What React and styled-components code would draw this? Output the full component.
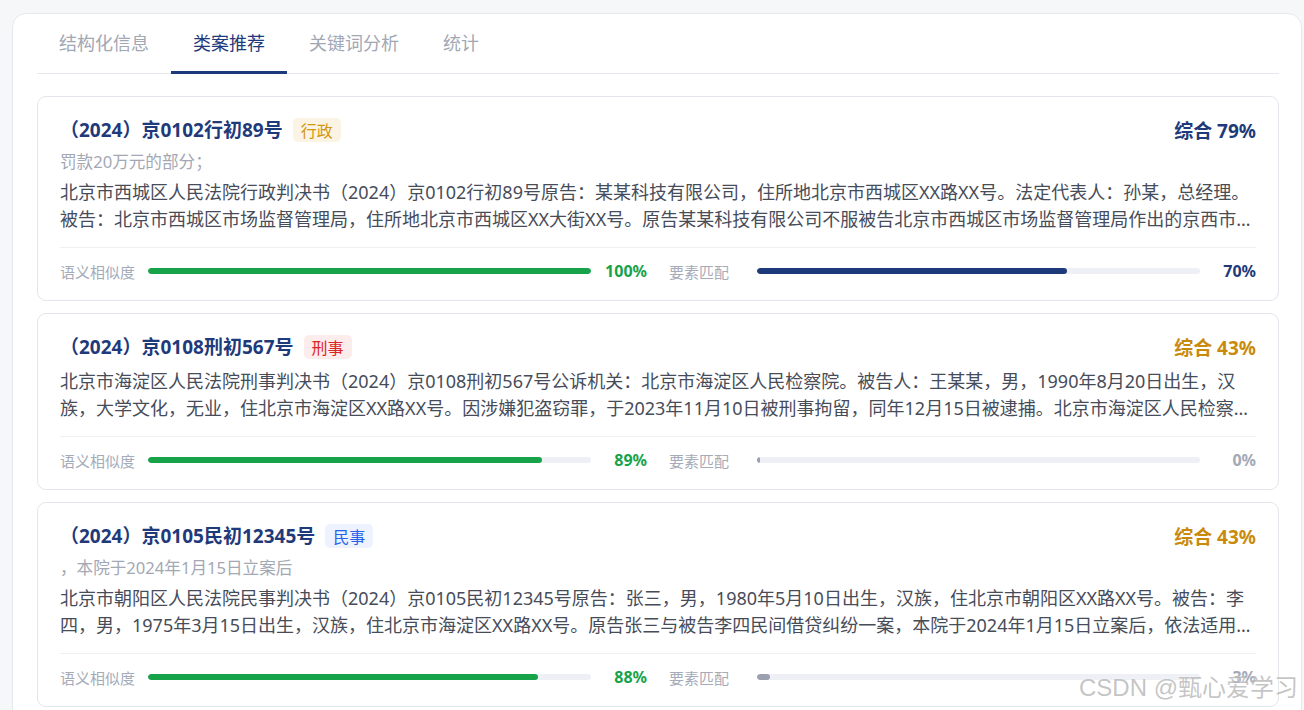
import React from "react";
import styled, { createGlobalStyle } from "styled-components";

const Global = createGlobalStyle`
  html, body { margin: 0; padding: 0; background: #f6f7f9; overflow: hidden; }
  body { font-family: "Noto Sans", "Noto Sans CJK SC", sans-serif; }
  * { box-sizing: border-box; }
`;

const Page = styled.div`
  height: 710px;
  padding: 13px 2px 0 12px;
  position: relative;
`;

const Panel = styled.div`
  background: #fff;
  border: 1px solid #e6e8ee;
  border-radius: 14px;
  padding: 14px 22px 20px 24px;
  min-height: 720px;
`;

const TabList = styled.div`
  display: flex;
  border-bottom: 1px solid #e6e8ee;
`;

const Tab = styled.div`
  padding: 0 22px 12px;
  line-height: 31px;
  font-size: 18px;
  color: ${(p) => (p.$active ? "#1f3a7a" : "#a2a7b4")};
  border-bottom: 3px solid ${(p) => (p.$active ? "#1f3a7a" : "transparent")};
  margin-bottom: -1px;
`;

const List = styled.div`
  display: flex;
  flex-direction: column;
  gap: 12px;
  margin-top: 22px;
`;

const Card = styled.div`
  border: 1px solid #e3e6ec;
  border-radius: 9px;
  padding: 19px 22px 18px;
  background: #fff;
`;

const Header = styled.div`
  display: flex;
  align-items: center;
  justify-content: space-between;
  height: 28px;
`;

const TitleWrap = styled.div`
  display: flex;
  align-items: center;
  gap: 10px;
`;

const Title = styled.div`
  font-size: 19px;
  font-weight: 700;
  color: #1f3a7a;
  line-height: 28px;
`;

const tagColors = {
  行政: { bg: "#fbf4e4", fg: "#d4960e" },
  刑事: { bg: "#fdecec", fg: "#dc2626" },
  民事: { bg: "#edf2fe", fg: "#2563eb" },
};

const Tag = styled.span`
  display: inline-flex;
  align-items: center;
  height: 24px;
  padding: 0 8px;
  border-radius: 5px;
  font-size: 16px;
  background: ${(p) => tagColors[p.$type].bg};
  color: ${(p) => tagColors[p.$type].fg};
`;

const Score = styled.div`
  font-size: 19px;
  font-weight: 700;
  color: ${(p) => (p.$high ? "#1f3a7a" : "#c98a0c")};
`;

const Sub = styled.div`
  margin-top: 6px;
  font-size: 16.6px;
  line-height: 24px;
  color: #a3a8b4;
`;

const Body = styled.div`
  margin-top: ${(p) => (p.$afterSub ? 5 : 7)}px;
  font-size: 18px;
  line-height: 27px;
  color: #474c59;
  display: -webkit-box;
  -webkit-line-clamp: 2;
  -webkit-box-orient: vertical;
  overflow: hidden;
`;

const Metrics = styled.div`
  margin-top: 14px;
  border-top: 1px solid #eef0f4;
  padding-top: 12px;
  display: grid;
  grid-template-columns: 1fr 1fr;
  column-gap: 22px;
`;

const Metric = styled.div`
  display: flex;
  align-items: center;
  height: 22px;
`;

const MetricLabel = styled.span`
  width: 76px;
  flex: none;
  font-size: 15px;
  color: #a6abb9;
  white-space: nowrap;
`;

const Track = styled.div`
  flex: 1;
  height: 6px;
  margin: 0 12px;
  border-radius: 3px;
  background: #eef0f5;
  overflow: hidden;
`;

const Fill = styled.div`
  height: 100%;
  min-width: 3px;
  border-radius: 3px;
  background: ${(p) => p.$color};
`;

const Pct = styled.span`
  width: 44px;
  flex: none;
  text-align: right;
  white-space: nowrap;
  font-size: 16px;
  font-weight: 700;
  color: ${(p) => p.$color};
`;

const Watermark = styled.div`
  position: absolute;
  right: 6px;
  bottom: 7px;
  font-size: 24px;
  line-height: 30px;
  color: rgba(140, 140, 140, 0.5);
  text-shadow: 0 0 2px rgba(255, 255, 255, 0.9);
  font-family: "Liberation Sans", "Noto Sans CJK SC", sans-serif;
`;

const cases = [
  {
    title: "（2024）京0102行初89号",
    type: "行政",
    score: 79,
    sub: "罚款20万元的部分；",
    body:
      "北京市西城区人民法院行政判决书（2024）京0102行初89号原告：某某科技有限公司，住所地北京市西城区XX路XX号。法定代表人：孙某，总经理。被告：北京市西城区市场监督管理局，住所地北京市西城区XX大街XX号。原告某某科技有限公司不服被告北京市西城区市场监督管理局作出的京西市监罚字处罚决定，向本院提起行政诉讼。",
    sem: 100,
    elem: 70,
  },
  {
    title: "（2024）京0108刑初567号",
    type: "刑事",
    score: 43,
    body:
      "北京市海淀区人民法院刑事判决书（2024）京0108刑初567号公诉机关：北京市海淀区人民检察院。被告人：王某某，男，1990年8月20日出生，汉族，大学文化，无业，住北京市海淀区XX路XX号。因涉嫌犯盗窃罪，于2023年11月10日被刑事拘留，同年12月15日被逮捕。北京市海淀区人民检察院以京海检刑诉号起诉书指控。",
    sem: 89,
    elem: 0,
  },
  {
    title: "（2024）京0105民初12345号",
    type: "民事",
    score: 43,
    sub: "，本院于2024年1月15日立案后",
    body:
      "北京市朝阳区人民法院民事判决书（2024）京0105民初12345号原告：张三，男，1980年5月10日出生，汉族，住北京市朝阳区XX路XX号。被告：李四，男，1975年3月15日出生，汉族，住北京市海淀区XX路XX号。原告张三与被告李四民间借贷纠纷一案，本院于2024年1月15日立案后，依法适用简易程序公开开庭进行了审理。",
    sem: 88,
    elem: 3,
  },
];

const tabs = ["结构化信息", "类案推荐", "关键词分析", "统计"];

function elemColor(v) {
  return v >= 50 ? "#1f3a7a" : "#9aa0b0";
}

export default function App() {
  return (
    <Page>
      <Global />
      <Panel>
        <TabList>
          {tabs.map((t, i) => (
            <Tab key={t} $active={i === 1}>
              {t}
            </Tab>
          ))}
        </TabList>
        <List>
          {cases.map((c) => (
            <Card key={c.title}>
              <Header>
                <TitleWrap>
                  <Title>{c.title}</Title>
                  <Tag $type={c.type}>{c.type}</Tag>
                </TitleWrap>
                <Score $high={c.score >= 60}>综合 {c.score}%</Score>
              </Header>
              {c.sub && <Sub>{c.sub}</Sub>}
              <Body $afterSub={!!c.sub}>{c.body}</Body>
              <Metrics>
                <Metric>
                  <MetricLabel>语义相似度</MetricLabel>
                  <Track>
                    <Fill $color="#16a34a" style={{ width: `${c.sem}%` }} />
                  </Track>
                  <Pct $color="#16a34a">{c.sem}%</Pct>
                </Metric>
                <Metric>
                  <MetricLabel>要素匹配</MetricLabel>
                  <Track>
                    <Fill $color={elemColor(c.elem)} style={{ width: `${c.elem}%` }} />
                  </Track>
                  <Pct $color={c.elem >= 50 ? "#1f3a7a" : "#a3a8b6"}>{c.elem}%</Pct>
                </Metric>
              </Metrics>
            </Card>
          ))}
        </List>
      </Panel>
      <Watermark>CSDN @甄心爱学习</Watermark>
    </Page>
  );
}
